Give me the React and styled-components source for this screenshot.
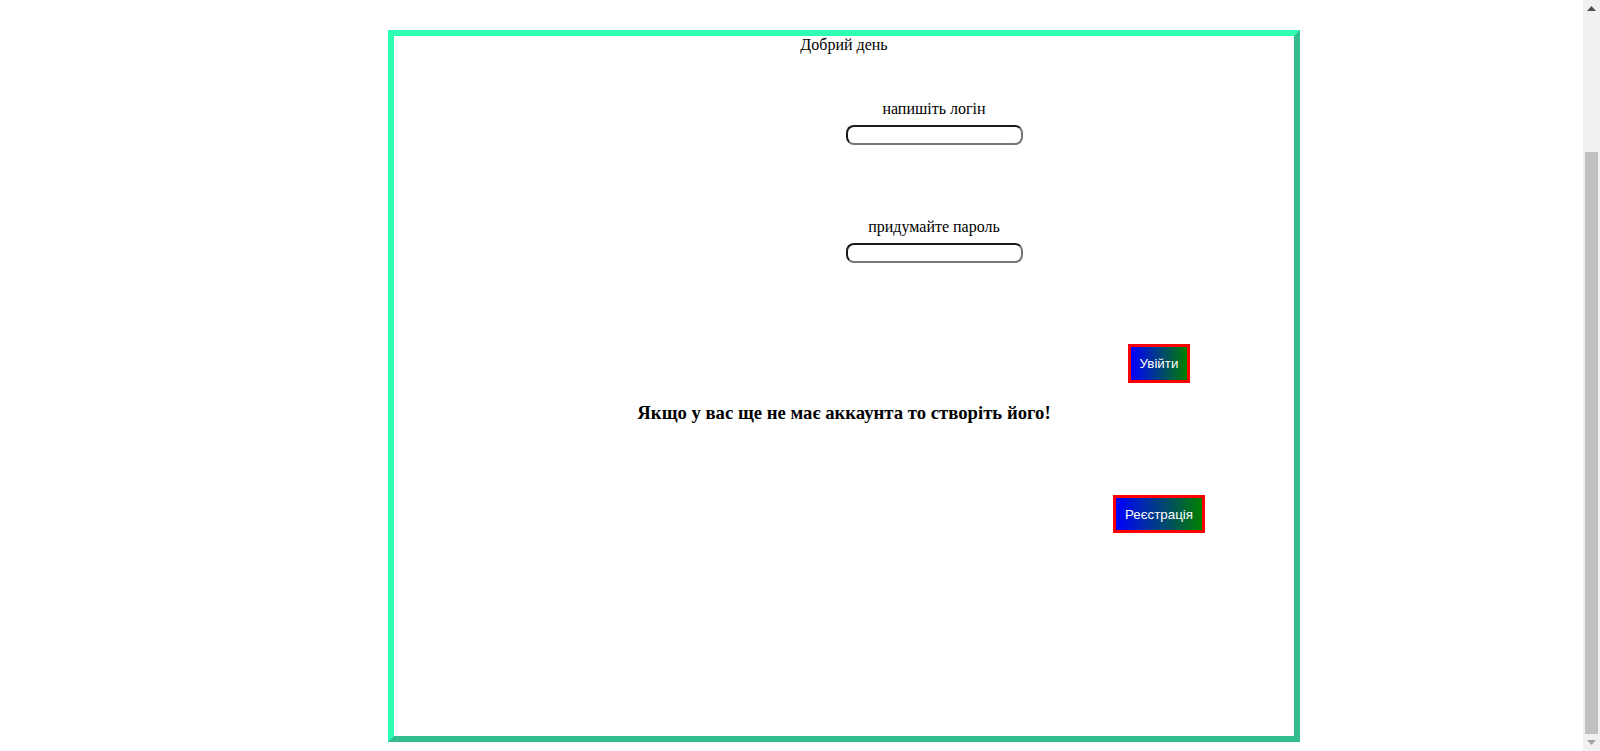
import styled, { createGlobalStyle } from "styled-components";

const GlobalStyle = createGlobalStyle`
body{
  margin:8px;
  background:#fff;
  font-family:"Liberation Serif","Times New Roman",serif;
  font-size:16px;
  color:#000;
}
`;

const Frame = styled.div`
  width:900px;
  height:700px;
  margin:22px 0 0 380px;
  border:6px solid;
  border-color:#2effb3 #33bd8c #33bd8c #2effb3;
`;

const Greeting = styled.div`
  text-align:center;
  line-height:18px;
`;

const Form = styled.div`
  margin-left:180px;
  text-align:center;
`;

const Field = styled.div`
  margin-top:${(p) => p.$top}px;
`;

const Label = styled.label`
  display:block;
  line-height:18px;
  margin-bottom:7px;
`;

const Input = styled.input`
  box-sizing:border-box;
  width:177px;
  height:20px;
  border:2px solid;
  border-color:#1a1a1a #767676 #767676 #1a1a1a;
  border-radius:8px;
  padding:1px 6px;
  font-family:"Liberation Sans",Arial,sans-serif;
  font-size:13px;
  outline:none;
`;

const ButtonRow = styled.div`
  margin-left:630px;
  margin-top:${(p) => p.$top}px;
  text-align:center;
  line-height:0;
`;

const GradientButton = styled.button`
  box-sizing:border-box;
  width:${(p) => p.$w}px;
  height:${(p) => p.$h}px;
  padding:0;
  border:3px solid #ff0000;
  background:linear-gradient(to right,#0000ff,#008000);
  color:#fff;
  font-family:"Liberation Sans",Arial,sans-serif;
  font-size:13.33px;
  cursor:pointer;
`;

const Notice = styled.h3`
  margin:${(p) => p.$top}px 0 0 0;
  text-align:center;
  font-size:18.72px;
  line-height:21px;
  font-weight:bold;
`;

/* browser scrollbar as it shows in the screenshot */
const Scrollbar = styled.div`
  position:fixed;
  top:0;
  right:0;
  width:17px;
  height:100vh;
  background:#f1f1f1;
  display:flex;
  flex-direction:column;
  align-items:center;
`;

const Arrow = styled.div`
  height:17px;
  width:17px;
  display:flex;
  align-items:center;
  justify-content:center;
  flex:none;
`;

const Track = styled.div`
  flex:1;
  width:100%;
  display:flex;
  flex-direction:column;
  justify-content:flex-end;
  align-items:center;
`;

const Thumb = styled.div`
  width:13px;
  height:582px;
  background:#c1c1c1;
`;

export default function App() {
  return (
    <>
      <GlobalStyle />
      <Frame>
        <Greeting>Добрий день</Greeting>
        <Form>
          <Field $top={46}>
            <Label htmlFor="login">напишіть логін</Label>
            <Input id="login" type="text" />
          </Field>
          <Field $top={73}>
            <Label htmlFor="password">придумайте пароль</Label>
            <Input id="password" type="password" />
          </Field>
        </Form>
        <ButtonRow $top={81}>
          <GradientButton $w={62} $h={39}>Увійти</GradientButton>
        </ButtonRow>
        <Notice $top={19}>Якщо у вас ще не має аккаунта то створіть його!</Notice>
        <ButtonRow $top={72}>
          <GradientButton $w={92} $h={38}>Реєстрація</GradientButton>
        </ButtonRow>
      </Frame>
      <Scrollbar>
        <Arrow>
          <svg width="9" height="5" viewBox="0 0 9 5">
            <path d="M4.5 0 L9 5 L0 5 Z" fill="#505050" />
          </svg>
        </Arrow>
        <Track>
          <Thumb />
        </Track>
        <Arrow>
          <svg width="9" height="5" viewBox="0 0 9 5">
            <path d="M0 0 L9 0 L4.5 5 Z" fill="#a3a3a3" />
          </svg>
        </Arrow>
      </Scrollbar>
    </>
  );
}
